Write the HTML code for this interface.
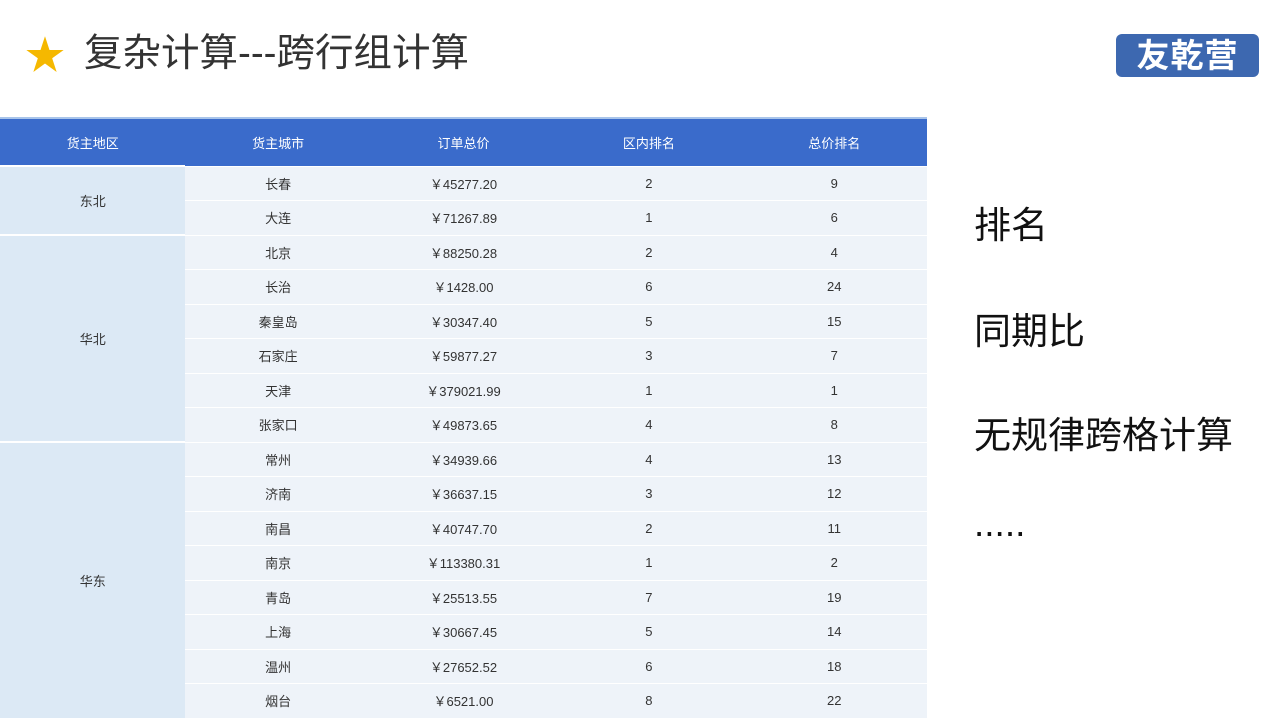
<!DOCTYPE html>
<html><head><meta charset="utf-8"><style>
body{margin:0;width:1280px;height:720px;background:#fff;position:relative;overflow:hidden;font-family:"Liberation Sans","Noto Sans CJK SC",sans-serif}
.title{position:absolute;left:84px;top:30px;font-size:38.5px;color:#333;line-height:48px}
.star{position:absolute;left:25px;top:34px;font-size:40px;color:#f5b800;line-height:44px}
.logo{position:absolute;left:1116px;top:34px;width:143px;height:43px;background:#3d68b0;border-radius:6px;color:#fff;font-size:33px;font-weight:bold;text-align:center;line-height:43px;letter-spacing:1px}
table{position:absolute;left:0;top:117px;width:927px;border-collapse:collapse;font-size:13px;color:#333;border-top:2px solid #a8c4ea}
th{background:#3a6bcb;color:#fff;font-weight:normal;height:46px;padding:0;width:185px}
td{background:#eef3f9;height:33.5px;padding:0;text-align:center;border-top:1px solid #fff}
td.r{background:#dce9f5;border-top:2px solid #fff}
.side{position:absolute;left:974px;font-size:37px;color:#111}
</style></head><body>
<div class="star">★</div>
<div class="title">复杂计算---跨行组计算</div>
<div class="logo">友乾营</div>
<table>
<tr><th>货主地区</th><th>货主城市</th><th>订单总价</th><th>区内排名</th><th>总价排名</th></tr>
<tr><td class="r" rowspan="2">东北</td><td>长春</td><td>￥45277.20</td><td>2</td><td>9</td></tr>
<tr><td>大连</td><td>￥71267.89</td><td>1</td><td>6</td></tr>
<tr><td class="r" rowspan="6">华北</td><td>北京</td><td>￥88250.28</td><td>2</td><td>4</td></tr>
<tr><td>长治</td><td>￥1428.00</td><td>6</td><td>24</td></tr>
<tr><td>秦皇岛</td><td>￥30347.40</td><td>5</td><td>15</td></tr>
<tr><td>石家庄</td><td>￥59877.27</td><td>3</td><td>7</td></tr>
<tr><td>天津</td><td>￥379021.99</td><td>1</td><td>1</td></tr>
<tr><td>张家口</td><td>￥49873.65</td><td>4</td><td>8</td></tr>
<tr><td class="r" rowspan="8">华东</td><td>常州</td><td>￥34939.66</td><td>4</td><td>13</td></tr>
<tr><td>济南</td><td>￥36637.15</td><td>3</td><td>12</td></tr>
<tr><td>南昌</td><td>￥40747.70</td><td>2</td><td>11</td></tr>
<tr><td>南京</td><td>￥113380.31</td><td>1</td><td>2</td></tr>
<tr><td>青岛</td><td>￥25513.55</td><td>7</td><td>19</td></tr>
<tr><td>上海</td><td>￥30667.45</td><td>5</td><td>14</td></tr>
<tr><td>温州</td><td>￥27652.52</td><td>6</td><td>18</td></tr>
<tr><td>烟台</td><td>￥6521.00</td><td>8</td><td>22</td></tr>
</table>
<div class="side" style="top:195px">排名</div>
<div class="side" style="top:301px">同期比</div>
<div class="side" style="top:405px">无规律跨格计算</div>
<div class="side" style="top:503px">.....</div>
</body></html>
